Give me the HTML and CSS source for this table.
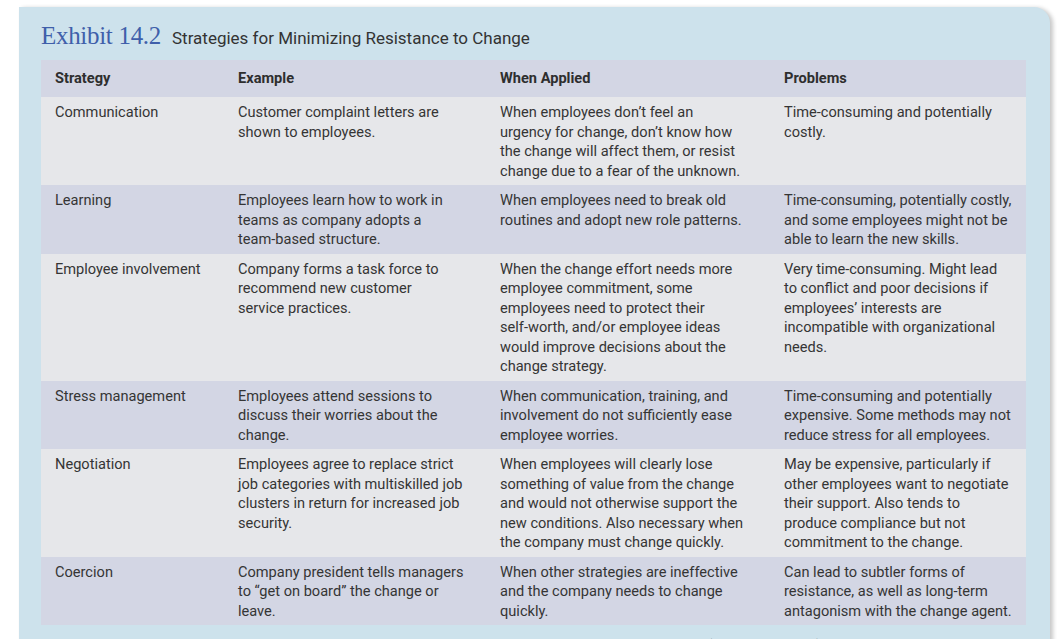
FILE: index.html
```html
<!DOCTYPE html>
<html lang="en">
<head>
<meta charset="utf-8">
<title>Exhibit 14.2</title>
<link rel="stylesheet" href="styles.css">
</head>
<body>
<section class="panel">
  <header class="title">
    <span class="exhibit">Exhibit 14.2</span>
    <span class="caption">Strategies for Minimizing Resistance to Change</span>
  </header>
  <table class="grid">
    <colgroup>
      <col class="c1"><col class="c2"><col class="c3"><col class="c4">
    </colgroup>
    <thead>
      <tr><th>Strategy</th><th>Example</th><th>When Applied</th><th>Problems</th></tr>
    </thead>
    <tbody>
      <tr>
        <td>Communication</td>
        <td>Customer complaint letters are<br>shown to employees.</td>
        <td>When employees don’t feel an<br>urgency for change, don’t know how<br>the change will affect them, or resist<br>change due to a fear of the unknown.</td>
        <td>Time-consuming and potentially<br>costly.</td>
      </tr>
      <tr>
        <td>Learning</td>
        <td>Employees learn how to work in<br>teams as company adopts a<br>team-based structure.</td>
        <td>When employees need to break old<br>routines and adopt new role patterns.</td>
        <td>Time-consuming, potentially costly,<br>and some employees might not be<br>able to learn the new skills.</td>
      </tr>
      <tr>
        <td>Employee involvement</td>
        <td>Company forms a task force to<br>recommend new customer<br>service practices.</td>
        <td>When the change effort needs more<br>employee commitment, some<br>employees need to protect their<br>self-worth, and/or employee ideas<br>would improve decisions about the<br>change strategy.</td>
        <td>Very time-consuming. Might lead<br>to conflict and poor decisions if<br>employees’ interests are<br>incompatible with organizational<br>needs.</td>
      </tr>
      <tr>
        <td>Stress management</td>
        <td>Employees attend sessions to<br>discuss their worries about the<br>change.</td>
        <td>When communication, training, and<br>involvement do not sufficiently ease<br>employee worries.</td>
        <td>Time-consuming and potentially<br>expensive. Some methods may not<br>reduce stress for all employees.</td>
      </tr>
      <tr>
        <td>Negotiation</td>
        <td>Employees agree to replace strict<br>job categories with multiskilled job<br>clusters in return for increased job<br>security.</td>
        <td>When employees will clearly lose<br>something of value from the change<br>and would not otherwise support the<br>new conditions. Also necessary when<br>the company must change quickly.</td>
        <td>May be expensive, particularly if<br>other employees want to negotiate<br>their support. Also tends to<br>produce compliance but not<br>commitment to the change.</td>
      </tr>
      <tr>
        <td>Coercion</td>
        <td>Company president tells managers<br>to “get on board” the change or<br>leave.</td>
        <td>When other strategies are ineffective<br>and the company needs to change<br>quickly.</td>
        <td>Can lead to subtler forms of<br>resistance, as well as long-term<br>antagonism with the change agent.</td>
      </tr>
    </tbody>
  </table>
  <p class="source">Source: Adapted from J. P. Kotter and L. A. Schlesinger, “Choosing Strategies for Change,” Harvard Business Review (March–April 1979), 106–114.</p>
</section>
</body>
</html>
```

FILE: styles.css
```css
html, body {
  margin: 0;
  padding: 0;
  background: #ffffff;
  overflow: hidden;
}

body {
  font-family: Roboto, "Liberation Sans", Arial, sans-serif;
  color: #353535;
}

.panel {
  margin: 7px 11px 0 19px;
  padding: 0 24px 0 22px;
  background: #cde2ec;
  border-top-right-radius: 16px;
  box-shadow: 3px 1px 4px rgba(0, 0, 0, 0.22);
  min-height: 700px;
}

.title {
  display: flex;
  align-items: baseline;
  gap: 11px;
  height: 53px;
  padding-top: 14px;
  box-sizing: border-box;
}

.exhibit {
  font-family: "Liberation Serif", "DejaVu Serif", serif;
  font-size: 25px;
  line-height: 30px;
  color: #3f5faa;
  letter-spacing: -0.3px;
}

.caption {
  font-size: 17px;
  color: #333333;
}

.grid {
  width: 985px;
  border-collapse: collapse;
  table-layout: fixed;
  font-size: 14.6px;
  line-height: 19.5px;
}

.c1 { width: 183px; }
.c2 { width: 262px; }
.c3 { width: 284px; }
.c4 { width: 256px; }

.grid th {
  height: 37px;
  padding: 0 14px;
  text-align: left;
  vertical-align: middle;
  font-weight: 700;
  color: #2e2e2e;
  background: #d3d6e4;
  box-sizing: border-box;
}

.grid td {
  padding: 6px 14px 4px 14px;
  vertical-align: top;
  text-align: left;
  white-space: nowrap;
}

.grid tbody tr:nth-child(odd) td {
  background: #e6e7ea;
}

.grid tbody tr:nth-child(even) td {
  background: #d3d6e4;
}

.source {
  margin: 11px 0 0 0;
  font-size: 13px;
  line-height: 17px;
  color: #555555;
  white-space: nowrap;
}
```
